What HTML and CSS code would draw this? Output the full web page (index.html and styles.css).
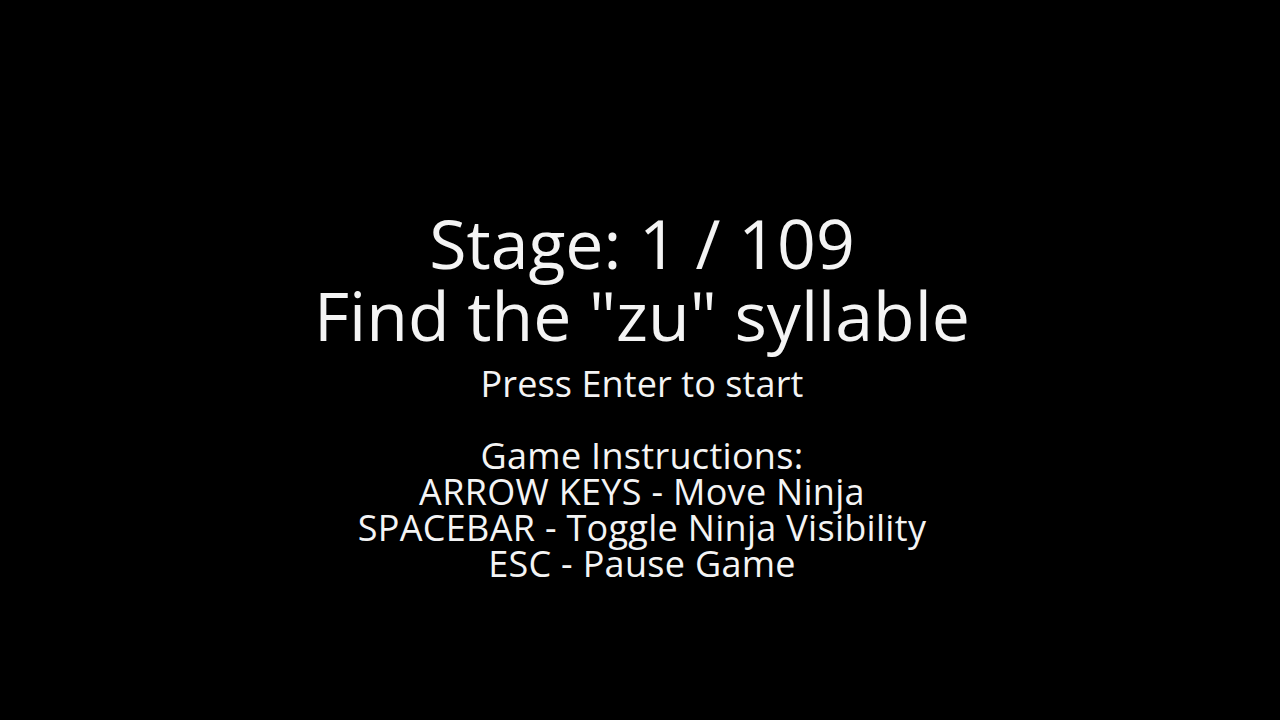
FILE: index.html
```html
<!DOCTYPE html>
<html>
<head>
<meta charset="utf-8">
<link rel="stylesheet" href="styles.css">
</head>
<body>
<main class="screen">
  <div class="title">
    <div class="line">Stage: 1 / 109</div>
    <div class="line">Find the "zu" syllable</div>
  </div>
  <div class="prompt">Press Enter to start</div>
  <div class="instructions">
    <div class="row">Game Instructions:</div>
    <div class="row">ARROW KEYS - Move Ninja</div>
    <div class="row">SPACEBAR - Toggle Ninja Visibility</div>
    <div class="row">ESC - Pause Game</div>
  </div>
</main>
</body>
</html>
```

FILE: styles.css
```css
html, body {
  margin: 0;
  padding: 0;
  background: #000;
}
.screen {
  width: 1280px;
  height: 720px;
  display: flex;
  flex-direction: column;
  align-items: center;
  padding-top: 207px;
  padding-left: 4px;
  box-sizing: border-box;
  color: #f4f4f4;
  font-family: "Open Sans", Lato, sans-serif;
  text-align: center;
}
.title {
  font-size: 68px;
  line-height: 72px;
}
.prompt {
  font-size: 36px;
  line-height: 36px;
  margin-top: 15px;
  letter-spacing: 0.1px;
}
.instructions {
  margin-top: 36px;
  font-size: 36px;
  line-height: 36px;
  letter-spacing: 0.3px;
}
```
